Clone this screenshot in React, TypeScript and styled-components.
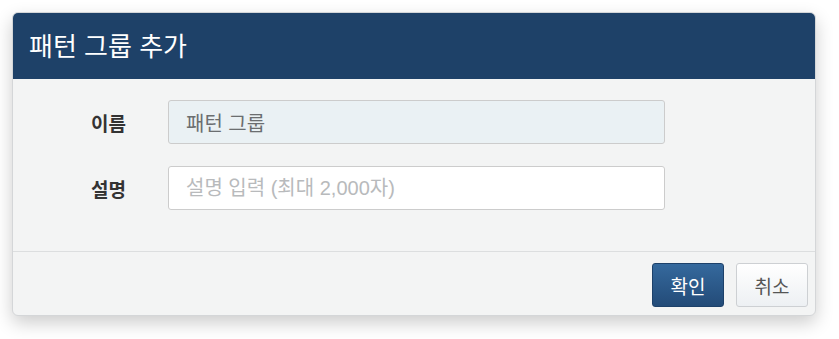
import React from 'react';
import styled, { createGlobalStyle } from 'styled-components';

const GlobalStyle = createGlobalStyle`
  html, body {
    margin: 0;
    padding: 0;
    min-height: 100%;
    background: #ffffff;
    font-family: "Liberation Sans", "Noto Sans CJK KR", sans-serif;
  }
  #root {
    padding: 12px 0 24px 12px;
  }
`;

const Dialog = styled.div`
  width: 804px;
  height: 304px;
  box-sizing: border-box;
  display: flex;
  flex-direction: column;
  background: #f3f4f4;
  border: 1px solid #d4d6d8;
  border-radius: 6px;
  overflow: hidden;
  box-shadow: 0 7px 18px rgba(0, 0, 0, 0.2);
`;

const Header = styled.div`
  height: 67px;
  flex: none;
  box-sizing: border-box;
  display: flex;
  align-items: center;
  padding: 0 17px 2px;
  margin: -1px -1px 0;
  background: #1e4168;
  color: #ffffff;
  font-size: 26px;
`;

const Body = styled.div`
  flex: 1;
  display: flex;
  flex-direction: column;
  gap: 22px;
  padding: 21px 0 0;
`;

const FormRow = styled.div`
  display: grid;
  grid-template-columns: 113px 497px;
  column-gap: 42px;
  align-items: center;
`;

const Label = styled.label`
  text-align: right;
  font-weight: bold;
  font-size: 19px;
  color: #333333;
`;

const TextInput = styled.input`
  height: 44px;
  box-sizing: border-box;
  padding: 0 17px;
  border: 1px solid #cccccc;
  border-radius: 3px;
  font-family: inherit;
  font-size: 20px;
  color: #666666;
  background: #ffffff;
  outline: none;

  &:disabled {
    background: #eaf1f4;
    color: #6b6e70;
  }

  &::placeholder {
    color: #b8babc;
  }
`;

const Footer = styled.div`
  flex: none;
  height: 64px;
  box-sizing: border-box;
  border-top: 1px solid #dcdedf;
  display: flex;
  justify-content: flex-end;
  align-items: flex-start;
  gap: 12px;
  padding: 11px 7px 0 0;
`;

const Button = styled.button<{ $primary?: boolean }>`
  height: 44px;
  min-width: 72px;
  padding: 0 16px;
  box-sizing: border-box;
  border-radius: 3px;
  font-family: inherit;
  font-size: 19px;
  cursor: pointer;
  border: 1px solid ${(p) => (p.$primary ? '#1d416a' : '#cdd0d3')};
  color: ${(p) => (p.$primary ? '#ffffff' : '#555555')};
  background: ${(p) =>
    p.$primary
      ? 'linear-gradient(#35699d, #234b78)'
      : 'linear-gradient(#ffffff, #edf0f3)'};
`;

export default function App() {
  return (
    <>
      <GlobalStyle />
      <Dialog>
        <Header>패턴 그룹 추가</Header>
        <Body>
          <FormRow>
            <Label>이름</Label>
            <TextInput value="패턴 그룹" disabled readOnly />
          </FormRow>
          <FormRow>
            <Label>설명</Label>
            <TextInput placeholder="설명 입력 (최대 2,000자)" />
          </FormRow>
        </Body>
        <Footer>
          <Button $primary>확인</Button>
          <Button>취소</Button>
        </Footer>
      </Dialog>
    </>
  );
}
